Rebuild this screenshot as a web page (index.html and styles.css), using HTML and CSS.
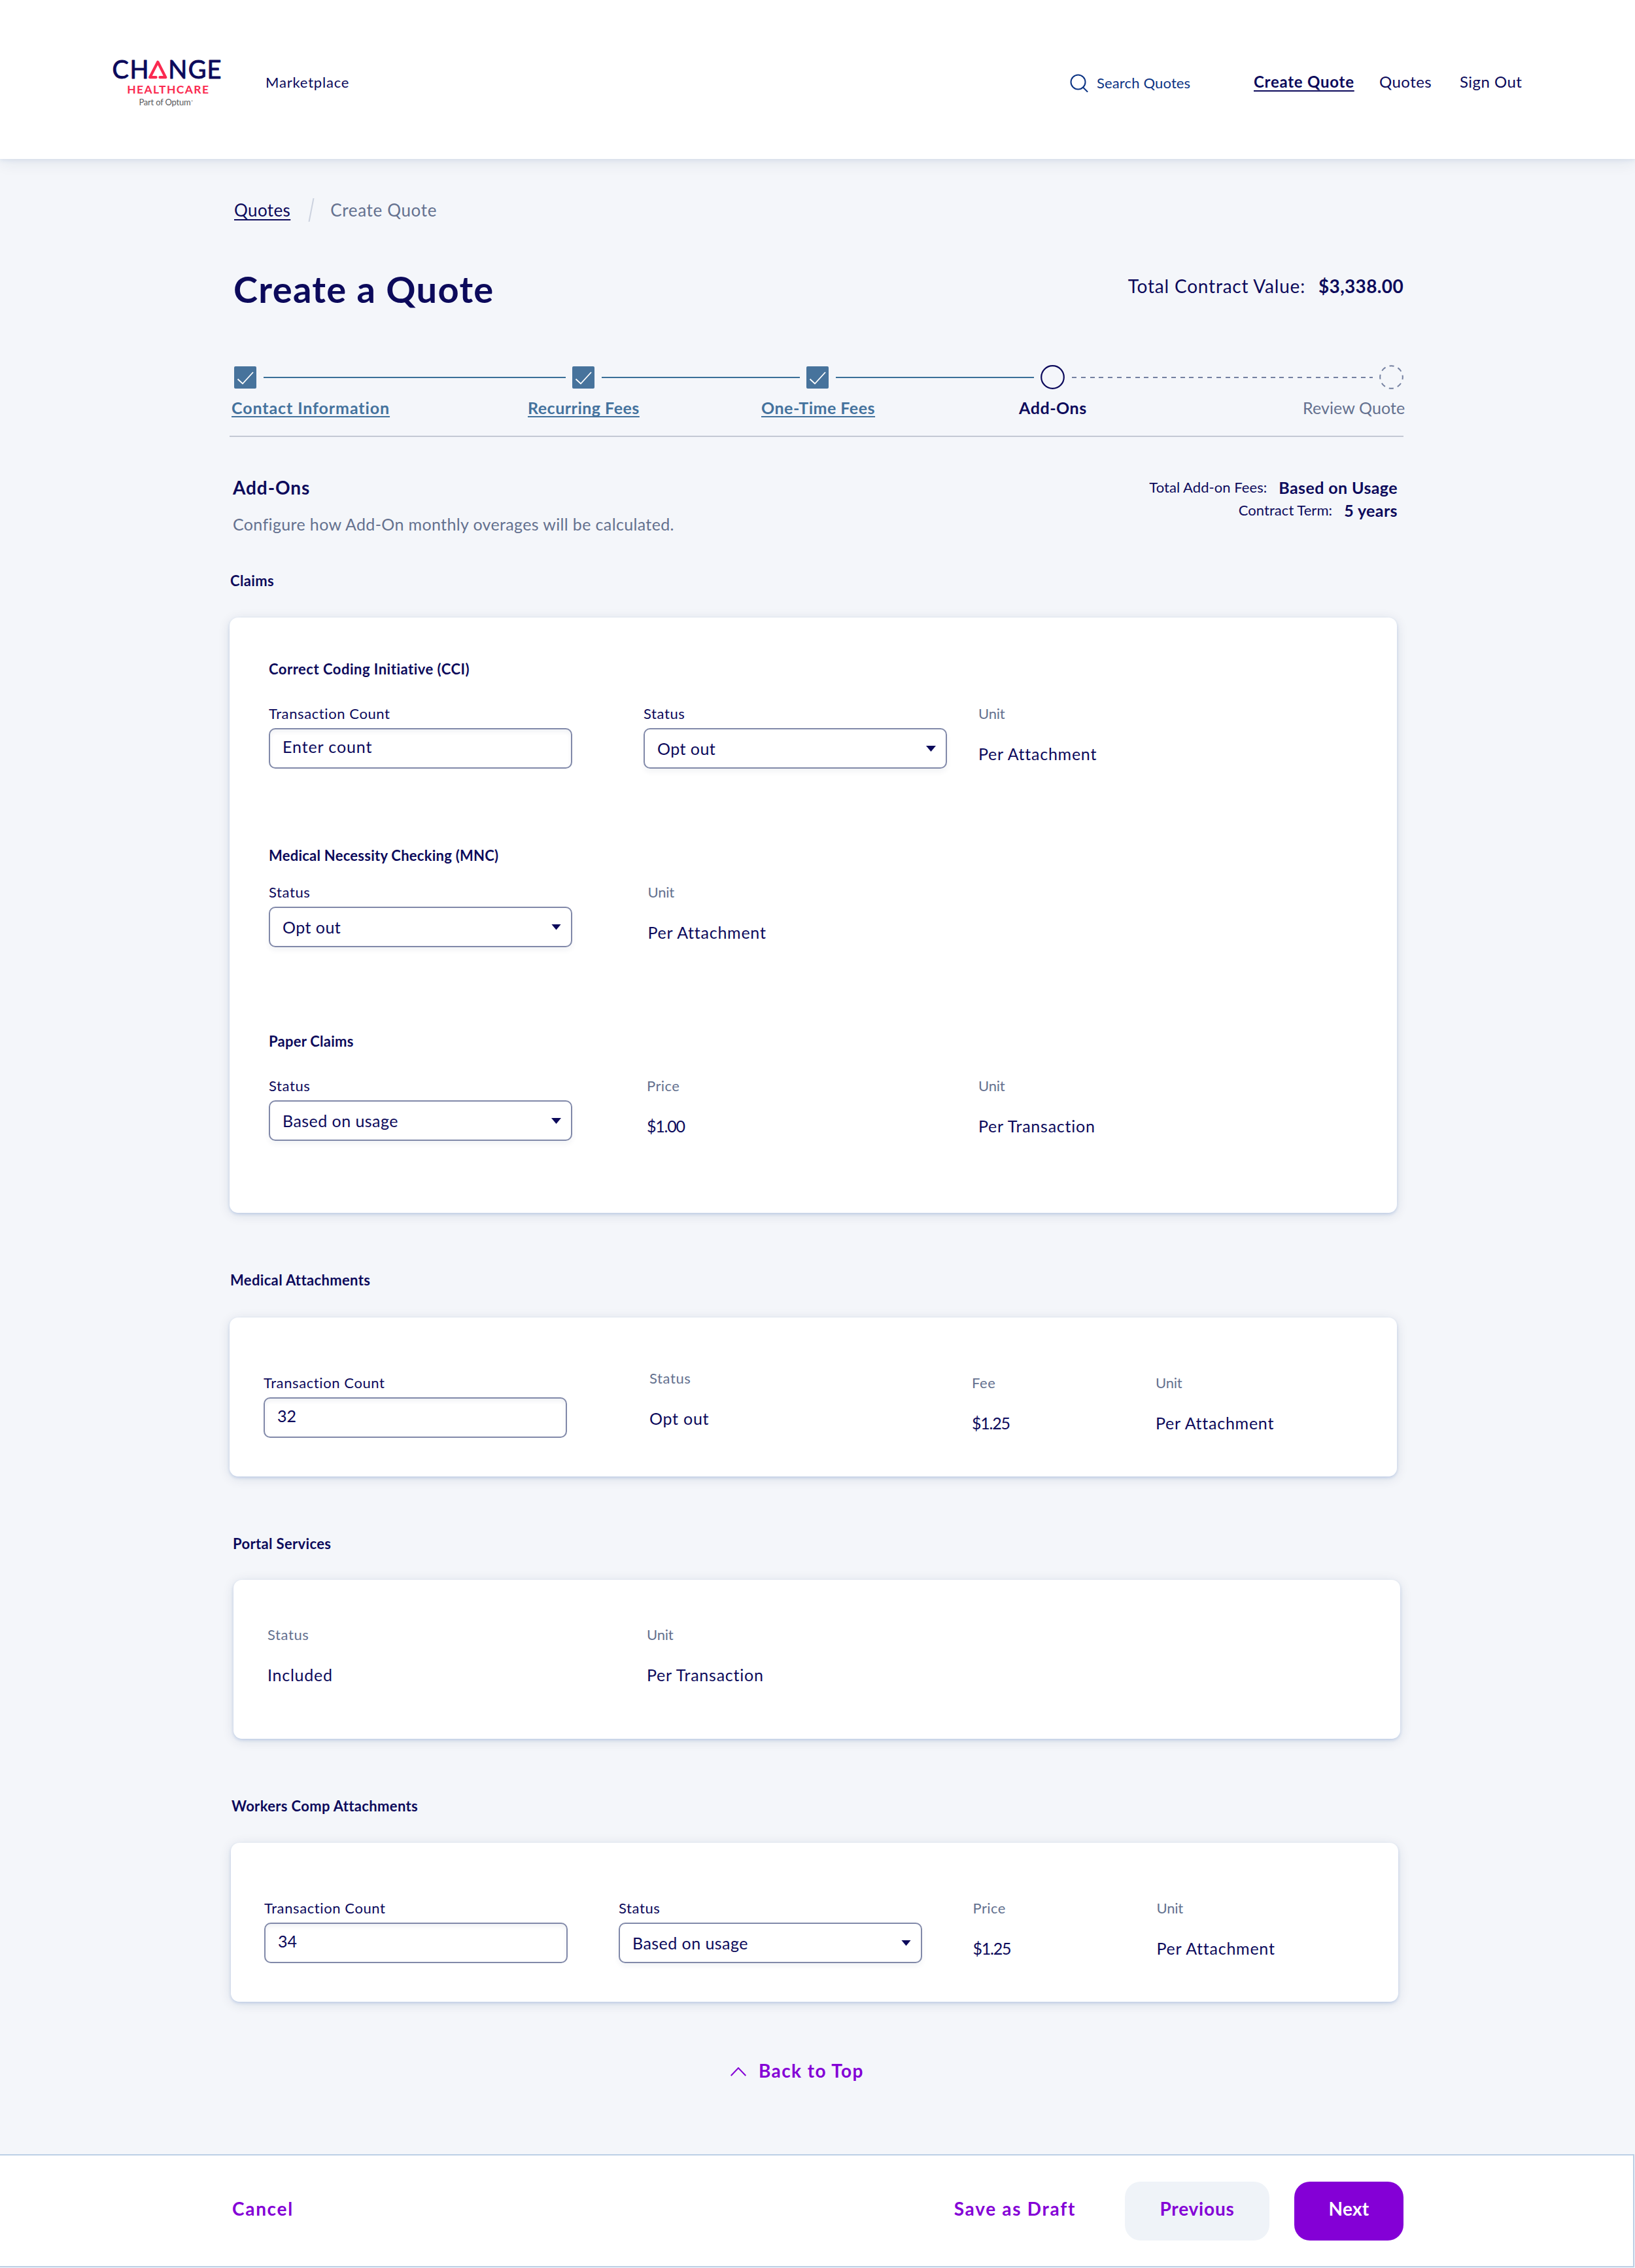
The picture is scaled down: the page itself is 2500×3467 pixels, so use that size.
FILE: index.html
```
<!DOCTYPE html>
<html lang="en">
<head>
	<meta charset="UTF-8">
	<title>Create a Quote</title>
	<link rel="stylesheet" href="styles.css">
</head>
<body>
	<header class="header">
		<svg class="logo" width="190" height="100" viewBox="160 76 190 100">
			<text class="logo-change" x="171.6 198.4 257.2 287.8 316.6" y="120.3">CHNGE</text>
			<path class="logo-mark" d="M238.5 118.2H229.2L241.3 94.8L253.2 118.2H244.5"/>
			<text class="logo-health" x="194.2" y="142.6">HEALTHCARE</text>
			<text class="logo-part" x="212.4" y="160.8">Part of Optum</text>
			<circle class="logo-dot" cx="293.6" cy="154.2" r="0.8"/>
		</svg>
		<a class="brand">Marketplace</a>
		<a class="search">
			<svg width="28" height="28" viewBox="0 0 28 28"><circle cx="12.5" cy="12.5" r="11"/><path d="M20 20.5L26.5 27"/></svg>
			Search Quotes
		</a>
		<a class="nav nav-active">Create Quote</a>
		<a class="nav">Quotes</a>
		<a class="nav">Sign Out</a>
	</header>

	<main class="main">
		<div class="crumbs">
			<a class="underline">Quotes</a>
			<svg width="10" height="36" viewBox="0 0 10 36"><path d="M8.5 0L1.5 36"/></svg>
			<span>Create Quote</span>
		</div>

		<div class="title-row">
			<h1>Create a Quote</h1>
			<p class="contract"><span>Total Contract Value:</span><b>$3,338.00</b></p>
		</div>

		<div class="steps">
			<i class="box"><svg width="34" height="34" viewBox="0 0 34 34"><path d="M5.5 19.5L13 26.5L29 9"/></svg></i>
			<i class="line line-1"></i>
			<i class="box"><svg width="34" height="34" viewBox="0 0 34 34"><path d="M5.5 19.5L13 26.5L29 9"/></svg></i>
			<i class="line line-2"></i>
			<i class="box"><svg width="34" height="34" viewBox="0 0 34 34"><path d="M5.5 19.5L13 26.5L29 9"/></svg></i>
			<i class="line line-3"></i>
			<svg class="dot" width="37" height="37" viewBox="0 0 37 37"><circle cx="18.5" cy="18.5" r="17.3"/></svg>
			<i class="line line-4"></i>
			<svg class="dot dot-next" width="37" height="37" viewBox="0 0 37 37"><circle cx="18.5" cy="18.5" r="17.3"/></svg>
		</div>
		<div class="step-names">
			<a class="done wide">Contact Information</a>
			<a class="done">Recurring Fees</a>
			<a class="done">One-Time Fees</a>
			<b>Add-Ons</b>
			<span>Review Quote</span>
		</div>

		<div class="intro">
			<div>
				<h2>Add-Ons</h2>
				<p class="hint">Configure how Add-On monthly overages will be calculated.</p>
			</div>
			<div class="totals">
				<p><span>Total Add-on Fees:</span><b>Based on Usage</b></p>
				<p><span>Contract Term:</span><b>5 years</b></p>
			</div>
		</div>

		<h3 class="claims-title">Claims</h3>
		<section class="card claims">
			<h4 class="cci-title">Correct Coding Initiative (CCI)</h4>
			<div class="fields cci">
				<div>
					<label>Transaction Count</label>
					<div class="input">Enter count</div>
				</div>
				<div>
					<label>Status</label>
					<div class="input select">Opt out</div>
				</div>
				<div class="read">
					<label class="unit">Unit</label>
					<p>Per Attachment</p>
				</div>
			</div>

			<h4>Medical Necessity Checking (MNC)</h4>
			<div class="fields mnc">
				<div>
					<label>Status</label>
					<div class="input select">Opt out</div>
				</div>
				<div class="read">
					<label class="unit">Unit</label>
					<p>Per Attachment</p>
				</div>
			</div>

			<h4>Paper Claims</h4>
			<div class="fields paper">
				<div>
					<label>Status</label>
					<div class="input select">Based on usage</div>
				</div>
				<div class="read">
					<label class="price">Price</label>
					<p class="money">$1.00</p>
				</div>
				<div class="read">
					<label class="unit">Unit</label>
					<p>Per Transaction</p>
				</div>
			</div>
		</section>

		<h3>Medical Attachments</h3>
		<section class="card medical">
			<div class="fields">
				<div>
					<label>Transaction Count</label>
					<div class="input number">32</div>
				</div>
				<div class="read read-up">
					<label>Status</label>
					<p>Opt out</p>
				</div>
				<div class="read">
					<label>Fee</label>
					<p class="money">$1.25</p>
				</div>
				<div class="read">
					<label class="unit">Unit</label>
					<p>Per Attachment</p>
				</div>
			</div>
		</section>

		<h3 class="portal-title">Portal Services</h3>
		<section class="card portal">
			<div class="fields">
				<div class="read">
					<label>Status</label>
					<p>Included</p>
				</div>
				<div class="read">
					<label class="unit">Unit</label>
					<p>Per Transaction</p>
				</div>
			</div>
		</section>

		<h3 class="workers-title">Workers Comp Attachments</h3>
		<section class="card workers">
			<div class="fields">
				<div>
					<label>Transaction Count</label>
					<div class="input number">34</div>
				</div>
				<div>
					<label>Status</label>
					<div class="input select">Based on usage</div>
				</div>
				<div class="read">
					<label class="price">Price</label>
					<p class="money">$1.25</p>
				</div>
				<div class="read">
					<label class="unit">Unit</label>
					<p>Per Attachment</p>
				</div>
			</div>
		</section>

		<a class="back">
			<svg width="24" height="14" viewBox="0 0 24 14"><path d="M0.7 13L12 1.2L23.3 13"/></svg>
			Back to Top
		</a>
	</main>

	<footer class="footer">
		<a class="cancel">Cancel</a>
		<a class="save">Save as Draft</a>
		<a class="btn">Previous</a>
		<a class="btn btn-next">Next</a>
	</footer>
</body>
</html>
```
FILE: styles.css
```
*{margin: 0;padding: 0;box-sizing: border-box;}
body{background: #f4f6fa;color: #0c0a5b;font: 25px/30px Lato, "Open Sans", sans-serif;letter-spacing: 0.6px;}
h1,h2,h3,h4,b{font-weight: 700;}
a,b,span,label,p{white-space: nowrap;}
svg{display: block;fill: none;flex: none;}

/* header */
.header{height: 243px;padding: 76px 0 0 160px;background: #fff;box-shadow: 0 2px 6px rgba(60,110,190,.1), 0 4px 24px rgba(20,40,80,.09);display: grid;grid-template-columns: 246px 1230px 281px 192px 123px auto;grid-template-rows: 100px;align-items: center;}
.logo-change{font-size: 38px;fill: #0c0a5b;stroke: #0c0a5b;stroke-width: 0.9;stroke-linejoin: round;letter-spacing: 0;}
.logo-mark{stroke: #fa2a50;stroke-width: 4.2;stroke-linecap: round;stroke-linejoin: round;}
.logo-health{font-size: 17.5px;font-weight: 700;fill: #fa2a50;letter-spacing: 1.4px;}
.logo-part{font-size: 13px;fill: #58595b;letter-spacing: -0.2px;}
.logo-dot{fill: #58595b;}
.brand{font-size: 22px;letter-spacing: 0.8px;}
.search{display: flex;align-items: center;gap: 13px;font-size: 22px;letter-spacing: 0.15px;color: #0b3384;padding-top: 2px;}
.search svg{stroke: #0b3384;stroke-width: 2;stroke-linecap: round;}
.nav{font-size: 24px;letter-spacing: 0.45px;padding-bottom: 3px;}
.nav-active{font-weight: 700;letter-spacing: 0.75px;text-decoration: underline 1.5px;text-decoration-skip-ink: none;text-underline-offset: 4px;}

/* page */
.main{width: 2146px;padding: 60px 0 0 351px;}
.crumbs{display: flex;align-items: center;padding-left: 7px;font-size: 26px;line-height: 36px;letter-spacing: 0.65px;color: #64718f;}
.crumbs svg{stroke: #ccd2df;stroke-width: 2;margin: 0 24px 0 27px;}
.underline{color: #0c0a5b;letter-spacing: 0.4px;text-decoration: underline 1.5px;text-decoration-skip-ink: none;text-underline-offset: 4px;}
.title-row{display: flex;justify-content: space-between;margin-top: 73px;padding-left: 6px;}
h1{font-size: 56px;line-height: 60px;letter-spacing: 1.35px;}
.contract{display: flex;gap: 20px;padding-top: 10px;font-size: 28px;letter-spacing: 0.8px;}
.contract b{letter-spacing: 0.35px;}

.steps{display: flex;align-items: center;gap: 10.5px;height: 37px;margin-top: 86px;padding-left: 7px;}
.box{width: 34px;height: 34px;flex: none;background: #47739c;border-radius: 2px;}
.box svg{stroke: #fff;stroke-width: 1.8;}
.line{height: 2px;flex: none;background: #3a6f98;}
.line-1{width: 462px;}
.line-2{width: 303px;}
.line-3{width: 303px;}
.line-4{width: 460px;background: repeating-linear-gradient(90deg, #7480a0 0 7px, transparent 7px 13.8px);}
.dot circle{stroke: #0c0a5b;stroke-width: 2.2;}
.dot-next circle{stroke: #7480a0;stroke-width: 2;stroke-dasharray: 7.2 6.39;stroke-dashoffset: 3.6;}
.step-names{display: grid;grid-template-columns: 453px 357px 394px 434px auto;padding: 13px 0 28px 3px;border-bottom: 2px solid #c3c8d4;}
.step-names b{letter-spacing: 0.55px;}
.step-names span{color: #64718f;letter-spacing: 0.1px;}
.done{font-weight: 700;color: #44729d;justify-self: start;letter-spacing: 0.5px;text-decoration: underline 2px;text-decoration-skip-ink: none;text-underline-offset: 3px;}
.wide{letter-spacing: 0.9px;}

.intro{display: flex;justify-content: space-between;padding: 60px 9px 0 5px;height: 205px;}
h2{font-size: 28px;letter-spacing: 0.9px;padding-top: 2px;}
.hint{margin-top: 26px;letter-spacing: 0.36px;color: #64718f;}
.totals{line-height: 34.5px;}
.totals p{display: flex;justify-content: flex-end;gap: 18px;}
.totals span{font-size: 22px;letter-spacing: 0.05px;}
.totals b{letter-spacing: 0.4px;}

/* cards */
h3{font-size: 22px;letter-spacing: 0.35px;margin: 88px 0 42px;padding-left: 1px;}
h4{font-size: 22px;letter-spacing: 0.25px;}
.cci-title{letter-spacing: 0.5px;}
.card{width: 1785px;height: 243px;background: #fff;border-radius: 13px;box-shadow: 0 2px 4px rgba(60,110,200,.22), 0 3px 18px rgba(20,40,80,.12);}
.fields{display: grid;}
label{display: block;font-size: 22px;}
.input{width: 464px;height: 62px;margin-top: 7px;padding: 11px 0 0 19px;border: 2px solid #8189a9;border-radius: 10px;letter-spacing: 0.9px;box-shadow: inset 0 4px 6px rgba(20,40,80,.06);}
.number{letter-spacing: 0;}
.select{display: flex;justify-content: space-between;padding: 14px 15px 0 19px;letter-spacing: 0.45px;box-shadow: 0 5px 8px rgba(20,40,80,.05);}
.select:after{content: "";width: 15px;height: 9px;margin-top: 11px;background: #0c0a5b;clip-path: polygon(0 0, 100% 0, 50% 100%);}
.read label{color: #64718f;}
.read p{margin-top: 31px;letter-spacing: 0.75px;}
.read .money{letter-spacing: -1.2px;}
.read-up{margin-top: -7px;}
.read .unit{letter-spacing: -0.2px;}
.read .price{letter-spacing: 0.4px;}

.claims-title{margin: 0 0 41px;}
.claims{height: 910px;padding: 64px 0 0 60px;}
.cci{grid-template-columns: 573px 512px auto;margin: 38px 0 118px;}
.mnc{grid-template-columns: 579.5px auto;margin: 25.5px 0 129.5px;}
.paper{grid-template-columns: 578px 507px auto;margin-top: 38px;}
.medical{padding: 84.5px 0 0 52px;}
.medical .fields{grid-template-columns: 590px 493px 281px auto;}
.portal-title{margin: 88px 0 39.5px;padding-left: 5px;}
.portal{width: 1784px;margin-left: 6px;padding: 69.5px 0 0 52px;}
.portal .fields{grid-template-columns: 580px auto;}
.workers-title{margin: 88.5px 0 41px;padding-left: 3px;}
.workers{margin-left: 1.5px;padding: 84.5px 0 0 51.5px;}
.workers .fields{grid-template-columns: 542px 541.5px 281px auto;}

.back{display: flex;align-items: center;gap: 19px;margin: 89.5px 0 0 766px;font-size: 28px;font-weight: 700;letter-spacing: 1.4px;color: #8400d6;}
.back svg{stroke: #8400d6;stroke-width: 2;margin-top: 4px;}

/* bottom bar */
.footer{height: 173px;width: 2499px;margin-top: 113.5px;padding: 39.5px 351px 0 355px;background: #fff;border: 2px solid #bccfe5;border-left: 0;display: flex;font-size: 28px;font-weight: 700;line-height: 83px;letter-spacing: 1.7px;color: #8400d6;}
.save{margin: 0 75px 0 auto;}
.btn{width: 221px;height: 90px;margin-right: 38px;border-radius: 24px;background: #eff3f8;text-align: center;letter-spacing: 0.8px;}
.btn-next{width: 167px;margin-right: 0;background: #8400d6;color: #fff;letter-spacing: 0.3px;}
```
